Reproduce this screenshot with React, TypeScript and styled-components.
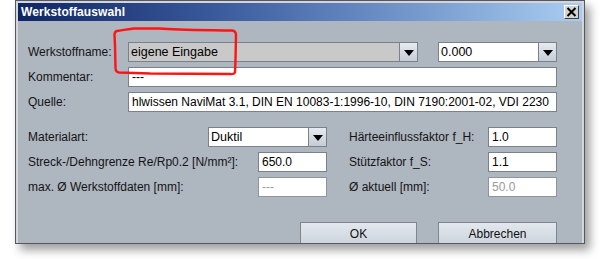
import React from "react";
import styled, { createGlobalStyle } from "styled-components";

const Global = createGlobalStyle`
  html, body { margin: 0; padding: 0; background: #ffffff; }
  body { font-family: "Liberation Sans", Arial, sans-serif; font-size: 12px; color: #111; }
`;

const Page = styled.div`
  position: relative;
  width: 600px;
  height: 259px;
  padding-left: 15px;
  box-sizing: border-box;
`;

const Frame = styled.div`
  width: 570px;
  height: 244px;
  box-sizing: border-box;
  border: 1px solid #55595f;
  background: #d2d6dc;
  padding: 2px 2px 0 2px;
  box-shadow: 5px 6px 9px rgba(0, 0, 0, 0.38);
  display: flex;
  flex-direction: column;
  overflow: hidden;
`;

const TitleBar = styled.div`
  height: 18px;
  flex-shrink: 0;
  display: flex;
  align-items: center;
  justify-content: space-between;
  padding: 0 3px 0 3px;
  background: linear-gradient(to right, #0f2563 0%, #3a5a9c 35%, #6c8fc6 65%, #a9cdf1 100%);
`;

const Title = styled.span`
  color: #ffffff;
  font-weight: bold;
  font-size: 12px;
  letter-spacing: 0.1px;
`;

const CloseButton = styled.div`
  width: 15px;
  height: 14px;
  box-sizing: border-box;
  background: #d6d3cc;
  border-top: 1px solid #ffffff;
  border-left: 1px solid #ffffff;
  border-right: 1px solid #404040;
  border-bottom: 1px solid #404040;
  display: flex;
  align-items: center;
  justify-content: center;
`;

const Body = styled.div`
  flex: 1;
  background: #aeb6c0;
  padding: 21px 25px 0 10px;
  overflow: hidden;
`;

const TopGrid = styled.div`
  display: grid;
  grid-template-columns: 100px 290px 20px 119px;
  grid-auto-rows: 20px;
  row-gap: 5px;
  align-items: center;
`;

const BottomGrid = styled.div`
  margin-top: 15px;
  display: grid;
  grid-template-columns: 180px 50px 69px 22px 139px 69px;
  grid-auto-rows: 20px;
  row-gap: 5px;
  align-items: center;
`;

const Label = styled.span<{ $span?: string }>`
  grid-column: ${(p) => p.$span || "auto"};
  white-space: nowrap;
  color: #141414;
  font-size: 12px;
`;

const Field = styled.div<{ $span?: string; $disabled?: boolean }>`
  grid-column: ${(p) => p.$span || "auto"};
  height: 20px;
  box-sizing: border-box;
  border: 1px solid ${(p) => (p.$disabled ? "#8e959e" : "#7a818a")};
  background: #ffffff;
  color: ${(p) => (p.$disabled ? "#9a9a9a" : "#000000")};
  padding: 0 3px;
  display: flex;
  align-items: center;
  overflow: hidden;
  white-space: nowrap;
  font-size: 12px;
`;

const Combo = styled.div<{ $span?: string; $grey?: boolean }>`
  grid-column: ${(p) => p.$span || "auto"};
  height: 20px;
  box-sizing: border-box;
  border: 1px solid #7a818a;
  background: ${(p) => (p.$grey ? "#c9c9c9" : "#ffffff")};
  display: flex;
  align-items: stretch;
`;

const ComboText = styled.span`
  flex: 1;
  display: flex;
  align-items: center;
  padding-left: 2px;
  font-size: 12.5px;
  color: #000;
  white-space: nowrap;
  overflow: hidden;
`;

const ArrowButton = styled.div`
  width: 17px;
  border-left: 1px solid #7a818a;
  background: linear-gradient(#e6ebf0, #c4ccd6);
  display: flex;
  align-items: center;
  justify-content: center;
`;

const Triangle = styled.div`
  width: 0;
  height: 0;
  border-left: 5px solid transparent;
  border-right: 5px solid transparent;
  border-top: 6px solid #000;
  margin-top: 1px;
`;

const ButtonRow = styled.div`
  margin-top: 25px;
  display: flex;
  justify-content: flex-end;
  gap: 21px;
`;

const Button = styled.div<{ $w: number }>`
  width: ${(p) => p.$w}px;
  height: 26px;
  box-sizing: border-box;
  border: 1px solid #7e858e;
  background: linear-gradient(#e3e8ee, #c9d1da);
  display: flex;
  align-items: flex-start;
  justify-content: center;
  padding-top: 4px;
  font-size: 12px;
  color: #111;
`;

const Annotation = styled.svg`
  position: absolute;
  left: 0;
  top: 0;
  pointer-events: none;
`;

const ComboBox = ({ text, grey, span }: { text: string; grey?: boolean; span?: string }) => (
  <Combo $grey={grey} $span={span}>
    <ComboText>{text}</ComboText>
    <ArrowButton>
      <Triangle />
    </ArrowButton>
  </Combo>
);

export default function App() {
  return (
    <>
      <Global />
      <Page>
        <Frame>
          <TitleBar>
            <Title>Werkstoffauswahl</Title>
            <CloseButton>
              <svg width="11" height="10" viewBox="0 0 11 10">
                <path d="M1.5 1 L9.5 9 M9.5 1 L1.5 9" stroke="#000" strokeWidth="2" />
              </svg>
            </CloseButton>
          </TitleBar>
          <Body>
            <TopGrid>
              <Label>Werkstoffname:</Label>
              <ComboBox text="eigene Eingabe" grey />
              <span />
              <ComboBox text="0.000" />
              <Label>Kommentar:</Label>
              <Field $span="2 / 5">---</Field>
              <Label>Quelle:</Label>
              <Field $span="2 / 5">
                hlwissen NaviMat 3.1, DIN EN 10083-1:1996-10, DIN 7190:2001-02, VDI 2230
              </Field>
            </TopGrid>
            <BottomGrid>
              <Label>Materialart:</Label>
              <ComboBox text="Duktil" span="2 / 4" />
              <span />
              <Label>Härteeinflussfaktor f_H:</Label>
              <Field>1.0</Field>

              <Label $span="1 / 3">Streck-/Dehngrenze Re/Rp0.2 [N/mm²]:</Label>
              <Field>650.0</Field>
              <span />
              <Label>Stützfaktor f_S:</Label>
              <Field>1.1</Field>

              <Label $span="1 / 3">max. Ø Werkstoffdaten [mm]:</Label>
              <Field $disabled>---</Field>
              <span />
              <Label>Ø aktuell [mm]:</Label>
              <Field $disabled>50.0</Field>
            </BottomGrid>
            <ButtonRow>
              <Button $w={117}>OK</Button>
              <Button $w={119}>Abbrechen</Button>
            </ButtonRow>
          </Body>
        </Frame>
        <Annotation width="600" height="259" viewBox="0 0 600 259">
          <path
            d="M117 31 C 125 30, 128 29, 134 28.5 L 160 28.5 C 175 30, 200 30, 232 30.5 Q 236 31, 236 35 L 235.5 60 L 235 72.5 Q 234 74.5, 230 74 L 150 73.5 L 119 72.5 Q 115.5 72, 115.5 68 L 115 45 L 114.5 35 Q 114.5 31.5, 117 31 Z"
            fill="none"
            stroke="#ff1414"
            strokeWidth="2.4"
            strokeLinejoin="round"
          />
        </Annotation>
      </Page>
    </>
  );
}
